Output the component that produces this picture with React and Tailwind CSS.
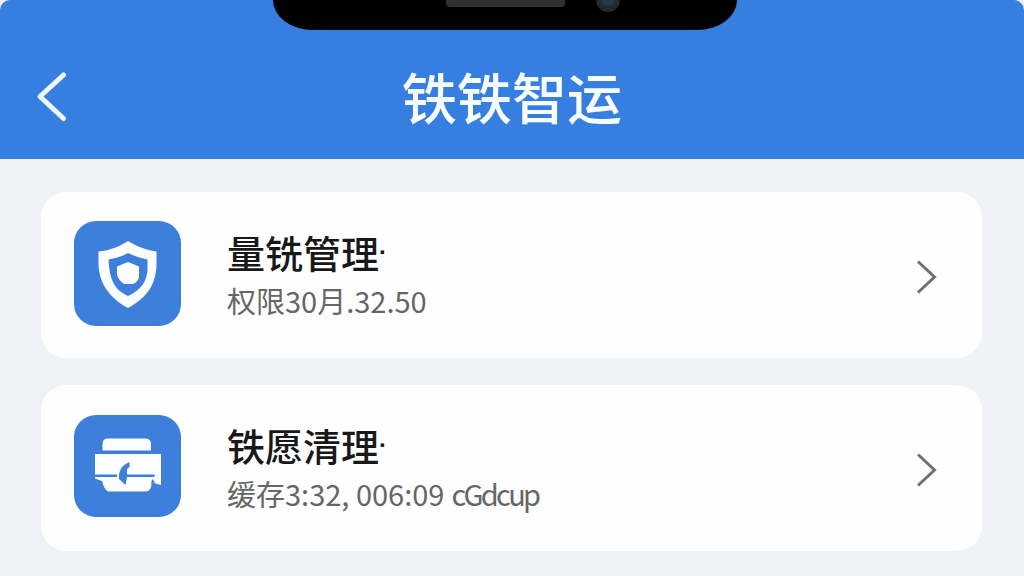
const ShieldIcon = () => (
  <svg viewBox="0 0 107 105" className="h-full w-full">
    <path d="M54 20 C61 25 74 29.5 82.500 30.5 V43 C82 63 74 76 54 87 C34 76 25 61 24.5 43 V30.500 C36 29.5 47 25 54 20 Z" fill="#fcfeff" />
    <path d="M54 32 C60 35 67 37.500 73.500 38.500 V49 C72.500 61 67 69 54 75 C41 69 35.500 60 34.500 38.500 C42 37.500 49 35 54 32 Z" fill="#3f7fdc" />
    <path d="M54 41 L65 45.500 V56 Q64 61 59 63 H50 Q44.500 59 43 54 V45.500 Z" fill="#fcfeff" />
  </svg>
)

const CleanIcon = () => (
  <svg viewBox="0 0 107 102" className="h-full w-full">
    <path d="M28.500 35.500 V29 Q28.500 24 33 23.500 H72 Q77 24 77 29 V35.500 Z" fill="#fcfeff" />
    <path d="M21 39 H87 V70 L78 67.500 Q77 76.500 72 76.500 H34 Q30 74 28 66 L21 63.500 Z" fill="#fcfeff" />
    <path d="M21 59.500 H43 V62 H21 Z M53 59.500 H80.500 V62 H53 Z" fill="#3f7fdc" />
    <path d="M55.500 47 Q47 50 45 59 V64 L51.500 70 L53 62 V54 L55.500 52 Z" fill="#3f7fdc" />
    <path d="M78 64 L81 67 L77 70 Z" fill="#3f7fdc" />
  </svg>
)

const items = [
  { title: '量铣管理', desc: '权限30月.32.50', icon: <ShieldIcon />, iconClass: 'mt-[29px] h-[105px]' },
  { title: '铁愿清理', desc: '缓存3:32, 006:09', unit: 'cGdcup', icon: <CleanIcon />, iconClass: 'mt-[30px] h-[102px]' },
]

const Header = () => (
  <header className="relative flex h-[159px] items-start rounded-t-[10px] bg-[#367ee0]">
    <div className="absolute left-[273px] top-0 flex h-[30px] w-[464px] items-start overflow-hidden rounded-b-[40px_30px] bg-black">
      <div className="ml-[173px] h-[7px] w-[119px] rounded-b bg-[#303030]" />
      <svg viewBox="0 0 26 12" className="ml-[30px] h-3 w-[26px]">
        <circle cx="13" cy="0" r="12" fill="#25292e" />
        <circle cx="13" cy="-1" r="7" fill="#27384d" />
      </svg>
    </div>
    <svg viewBox="0 0 34 54" className="ml-[35px] mt-[70px] h-[54px] w-[34px]" fill="none" stroke="#edfbff" strokeWidth="5" strokeLinecap="round">
      <path d="M28.500 5 L5 26.500 L28.500 48.500" strokeLinejoin="round" />
    </svg>
    <h1 className="ml-[333px] mt-[55px] whitespace-nowrap text-[55px] font-medium leading-[80px] text-[#f7fdff]">铁铁智运</h1>
  </header>
)

const App = () => {
  return (
    <div className="h-[576px] w-[1024px] overflow-hidden bg-[#f1f2f5] font-['Noto_Sans_CJK_SC',sans-serif]">
      <Header />
      <main className="flex flex-col gap-[27px] pl-[41px] pt-[33px]">
        {items.map((item) => (
          <div key={item.title} className="flex h-[166px] w-[941px] items-start rounded-[25px] bg-[#fefefe] pl-[33px]">
            <div className={`w-[107px] shrink-0 rounded-[22px] bg-[#3f7fdc] ${item.iconClass}`}>{item.icon}</div>
            <div className="ml-[46px] flex flex-1 flex-col whitespace-nowrap pt-[33px]">
              <div className="flex h-[54px] text-[38px] font-medium leading-[54px] text-[#181818]">
                <span>{item.title}</span>
                <span className="font-['Liberation_Sans',sans-serif] text-[24px] font-bold">·</span>
              </div>
              <div className="flex h-[40px] text-[29px] leading-[42px] text-[#666]">
                <span>{item.desc}</span>
                {item.unit && <span className="ml-[7px] tracking-[-2.700px]">{item.unit}</span>}
              </div>
            </div>
            <svg viewBox="0 0 24 38" className="mr-[43px] mt-[66px] h-[38px] w-6" fill="none" stroke="#707070" strokeWidth="3">
              <path d="M3 3.500 L19.500 19 L3 34.500" />
            </svg>
          </div>
        ))}
      </main>
    </div>
  )
}

export default App
